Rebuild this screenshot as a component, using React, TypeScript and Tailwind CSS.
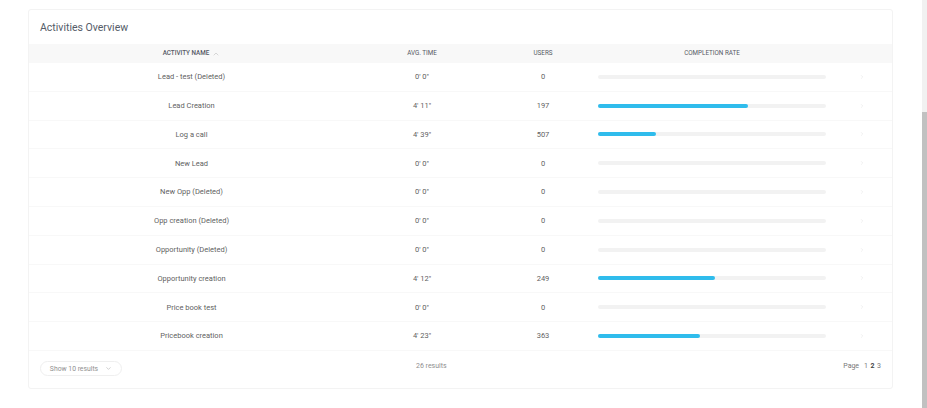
import { ChevronDown, ChevronRight, ChevronUp } from "lucide-react";

type Row = { name: string; time: string; users: number; rate: number };

const rows: Row[] = [
  { name: "Lead - test (Deleted)", time: "0' 0\"", users: 0, rate: 0 },
  { name: "Lead Creation", time: "4' 11\"", users: 197, rate: 66 },
  { name: "Log a call", time: "4' 39\"", users: 507, rate: 25.5 },
  { name: "New Lead", time: "0' 0\"", users: 0, rate: 0 },
  { name: "New Opp (Deleted)", time: "0' 0\"", users: 0, rate: 0 },
  { name: "Opp creation (Deleted)", time: "0' 0\"", users: 0, rate: 0 },
  { name: "Opportunity (Deleted)", time: "0' 0\"", users: 0, rate: 0 },
  { name: "Opportunity creation", time: "4' 12\"", users: 249, rate: 51.5 },
  { name: "Price book test", time: "0' 0\"", users: 0, rate: 0 },
  { name: "Pricebook creation", time: "4' 23\"", users: 363, rate: 44.8 },
];

const gridCols = "grid grid-cols-[325px_136px_106px_2px_228px_72px_1fr] items-center";

export default function App() {
  return (
    <div className="h-[408px] overflow-hidden bg-white font-['Roboto',sans-serif] flex">
      <div className="flex-1 pl-[28px] pt-[9px]">
        <div className="w-[865px] h-[380px] rounded-[3px] border border-[#f3f3f3] bg-white">
          <div className="h-[34px] pl-[11px] pt-[10px] text-[10.5px] leading-[16px] text-[#555c68]">
            Activities Overview
          </div>

          <div className={`${gridCols} h-[19px] pt-[1px] bg-[#f8f8f8] text-[6.3px] text-[#555864] text-center`}>
            <div className="flex items-center justify-center gap-[3px] font-medium">
              ACTIVITY NAME
              <ChevronUp className="h-[8px] w-[8px] text-[#c4c4c4]" />
            </div>
            <div>AVG. TIME</div>
            <div>USERS</div>
            <div />
            <div>COMPLETION RATE</div>
          </div>

          {rows.map((row) => (
            <div key={row.name} className={`${gridCols} h-[28.8px] border-b border-[#f8f8f8] text-[7.5px] text-[#5f5f5f] text-center`}>
              <div>{row.name}</div>
              <div>{row.time}</div>
              <div>{row.users}</div>
              <div />
              <div className="h-[4px] rounded-full bg-[#f2f2f2]">
                {row.rate > 0 && (
                  <div className="h-[4px] rounded-full bg-[#2fbcec]" style={{ width: `${row.rate}%` }} />
                )}
              </div>
              <div className="flex justify-center">
                <ChevronRight className="h-[6px] w-[6px] text-[#e2e2e2]" />
              </div>
            </div>
          ))}

          <div className="grid grid-cols-[376px_1fr_auto] items-start pl-[11px] pr-[11px] pt-[10.5px]">
            <div className="flex h-[15px] w-[82px] items-center justify-center gap-[7px] rounded-full border border-[#efefef] text-[6.8px] text-[#8f8f8f]">
              Show 10 results
              <ChevronDown className="h-[7px] w-[7px] text-[#b0b0b0]" />
            </div>
            <div className="text-[7px] leading-[10px] text-[#8f8f8f]">26 results</div>
            <div className="flex gap-[2.5px] text-[7px] leading-[10px] text-[#777]">
              <span className="mr-[2.5px]">Page</span>
              <span>1</span>
              <span className="font-bold text-[#444]">2</span>
              <span>3</span>
            </div>
          </div>
        </div>
      </div>

      <div className="flex w-[5px] flex-col bg-[#f1f1f1] pt-[112px]">
        <div className="flex-1 bg-[#c1c1c1]" />
      </div>
    </div>
  );
}
